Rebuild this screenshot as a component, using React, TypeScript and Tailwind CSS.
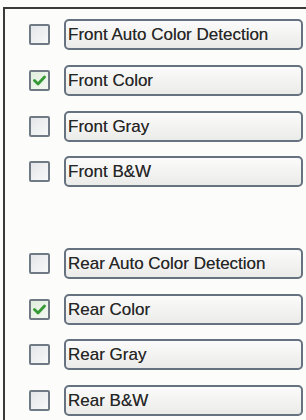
import React, { useState } from 'react';

type Option = { id: string; label: string };

const front: Option[] = [
    { id: 'front-auto', label: 'Front Auto Color Detection' },
    { id: 'front-color', label: 'Front Color' },
    { id: 'front-gray', label: 'Front Gray' },
    { id: 'front-bw', label: 'Front B&W' },
];

const rear: Option[] = [
    { id: 'rear-auto', label: 'Rear Auto Color Detection' },
    { id: 'rear-color', label: 'Rear Color' },
    { id: 'rear-gray', label: 'Rear Gray' },
    { id: 'rear-bw', label: 'Rear B&W' },
];

const CheckBox: React.FC<{ checked: boolean; onToggle: () => void }> = ({ checked, onToggle }) => (
    <button
        onClick={onToggle}
        className={`w-[21px] h-[21px] shrink-0 rounded-[2px] border-2 border-[#6f7a85] flex items-center justify-center ${
            checked ? 'bg-gradient-to-br from-[#dfeedd] to-[#f4f8f2]' : 'bg-gradient-to-br from-[#e3e6e9] to-[#f8f8f8]'
        }`}
    >
        {checked && (
            <svg width="13" height="11" viewBox="0 0 13 11">
                <path d="M1.5 5.5 L5 9 L11.5 2" fill="none" stroke="#359a35" strokeWidth="2.8" strokeLinecap="round" strokeLinejoin="round" />
            </svg>
        )}
    </button>
);

const Row: React.FC<{ option: Option; checked: boolean; onToggle: () => void }> = ({ option, checked, onToggle }) => (
    <div className="flex items-center gap-[14px] h-[31px]">
        <CheckBox checked={checked} onToggle={onToggle} />
        <div className="flex-1 h-full rounded-[5px] border-2 border-[#66727f] bg-gradient-to-b from-[#fbfbfb] to-[#ebebe9] flex items-center pl-[2px] text-[17px] leading-none text-[#262626] [text-shadow:0_0_0.6px_rgba(0,0,0,0.5)]">
            {option.label}
        </div>
    </div>
);

const App: React.FC = () => {
    const [checked, setChecked] = useState<Record<string, boolean>>({ 'front-color': true, 'rear-color': true });
    const toggle = (id: string) => setChecked(prev => ({ ...prev, [id]: !prev[id] }));

    return (
        <div className="w-[306px] h-[420px] bg-[#fcfcfb] overflow-hidden pl-[3px] pt-[7px]" style={{ fontFamily: '"Liberation Sans", Arial, sans-serif' }}>
            <div className="h-full border-l-2 border-t-2 border-[#3a3a3a] pl-[24px] pr-[3px] pt-[10px] flex flex-col gap-[14.75px]">
                {front.map(o => (
                    <Row key={o.id} option={o} checked={!!checked[o.id]} onToggle={() => toggle(o.id)} />
                ))}
                <div className="h-[31px] shrink-0" />
                {rear.map(o => (
                    <Row key={o.id} option={o} checked={!!checked[o.id]} onToggle={() => toggle(o.id)} />
                ))}
            </div>
        </div>
    );
};

export default App;
